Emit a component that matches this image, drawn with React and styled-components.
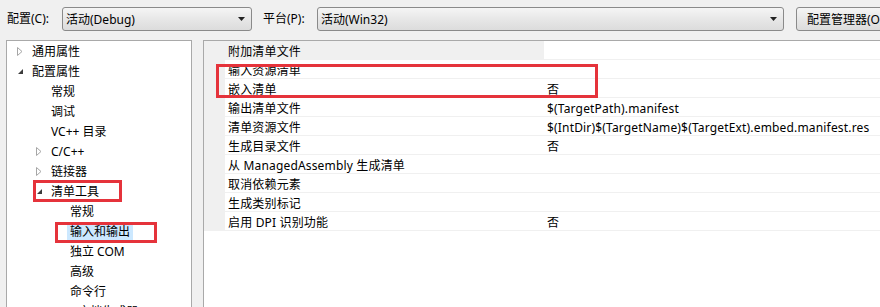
import React from "react";
import styled, { createGlobalStyle } from "styled-components";

const Global = createGlobalStyle`
  html, body { margin: 0; padding: 0; background: #f0f0f0; overflow: hidden; }
  body {
    font-family: "Segoe UI", "Noto Sans", "Noto Sans CJK SC", sans-serif;
    font-size: 12px;
    color: #000;
  }
`;

const Page = styled.div`
  width: 880px;
  height: 307px;
  overflow: hidden;
  background: #f0f0f0;
`;

const TopBar = styled.div`
  display: flex;
  align-items: center;
  height: 24px;
  padding: 7px 0 0 7px;
  white-space: nowrap;
`;

const FieldLabel = styled.span`
  width: ${(p) => p.$w}px;
  flex: none;
  line-height: 24px;
`;

const Select = styled.div`
  flex: none;
  box-sizing: border-box;
  width: ${(p) => p.$w}px;
  height: 24px;
  margin-right: ${(p) => p.$mr || 0}px;
  display: flex;
  align-items: center;
  justify-content: space-between;
  padding: 0 5px 0 3px;
  border: 1px solid #8a8a8a;
  border-radius: 3px;
  background: linear-gradient(#f5f5f5, #e6e6e6 55%, #dcdcdc);
`;

const Arrow = styled.svg`
  width: 7px;
  height: 4px;
  margin-right: 1px;
`;

const Button = styled.div`
  flex: none;
  box-sizing: border-box;
  width: 110px;
  height: 24px;
  display: flex;
  align-items: center;
  padding-left: 10px;
  border: 1px solid #8a8a8a;
  border-radius: 3px;
  background: linear-gradient(#f5f5f5, #e6e6e6 55%, #dcdcdc);
`;

const Main = styled.div`
  display: flex;
  gap: 11px;
  margin-top: 9px;
  padding-left: 6px;
`;

const TreePanel = styled.div`
  position: relative;
  flex: none;
  box-sizing: border-box;
  width: 186px;
  height: 280px;
  background: #fff;
  border: 1px solid #a9a9a9;
  overflow: hidden;
`;

const TreeRow = styled.div`
  display: flex;
  align-items: center;
  height: 20px;
  padding-left: ${(p) => 8 + p.$level * 19}px;
  white-space: nowrap;
`;

const Expander = styled.span`
  flex: none;
  width: 15px;
  padding-left: 2px;
  display: flex;
  align-items: center;
`;

const TreeLabel = styled.span`
  margin-left: -3px;
  padding: 0 3px;
  line-height: 17px;
  background: ${(p) => (p.$selected ? "#cce8ff" : "transparent")};
`;

const GridPanel = styled.div`
  position: relative;
  flex: 1;
  height: 280px;
  background: #fff;
  border-top: 1px solid #a9a9a9;
  border-left: 1px solid #a9a9a9;
`;

const PropRow = styled.div`
  display: grid;
  grid-template-columns: 21px 319px 1fr;
  height: 19px;
  white-space: nowrap;
`;

const Gutter = styled.div`
  background: #f0f0f0;
`;

const Cell = styled.div`
  box-sizing: border-box;
  padding: 3px 0 0 3px;
  line-height: 15px;
  letter-spacing: 0.17px;
  border-bottom: 1px solid #f0f0f0;
  background: ${(p) => (p.$selected ? "#f0f0f0" : "#fff")};
  overflow: hidden;
`;

const Mark = styled.div`
  position: absolute;
  box-sizing: border-box;
  border: 3px solid #e5333b;
  pointer-events: none;
`;

const Collapsed = () => (
  <svg width="6" height="9" viewBox="0 0 6 9">
    <path d="M0.5 0.5 L5 4.5 L0.5 8.5 Z" fill="none" stroke="#a6a6a6" strokeWidth="1" />
  </svg>
);

const Expanded = () => (
  <svg width="7" height="7" viewBox="0 0 7 7">
    <path d="M6 1 L6 6 L1 6 Z" fill="#3c3c3c" />
  </svg>
);

const tree = [
  { level: 0, text: "通用属性", exp: "c" },
  { level: 0, text: "配置属性", exp: "e" },
  { level: 1, text: "常规" },
  { level: 1, text: "调试" },
  { level: 1, text: "VC++ 目录" },
  { level: 1, text: "C/C++", exp: "c" },
  { level: 1, text: "链接器", exp: "c" },
  { level: 1, text: "清单工具", exp: "e" },
  { level: 2, text: "常规" },
  { level: 2, text: "输入和输出", selected: true },
  { level: 2, text: "独立 COM" },
  { level: 2, text: "高级" },
  { level: 2, text: "命令行" },
  { level: 1, text: "XML 文档生成器", exp: "c" },
];

const props = [
  ["附加清单文件", "", true],
  ["输入资源清单", ""],
  ["嵌入清单", "否"],
  ["输出清单文件", "$(TargetPath).manifest"],
  ["清单资源文件", "$(IntDir)$(TargetName)$(TargetExt).embed.manifest.res"],
  ["生成目录文件", "否"],
  ["从 ManagedAssembly 生成清单", ""],
  ["取消依赖元素", ""],
  ["生成类别标记", ""],
  ["启用 DPI 识别功能", "否"],
];

const DropArrow = () => (
  <Arrow viewBox="0 0 7 4">
    <path d="M0 0 L7 0 L3.5 4 Z" fill="#222" />
  </Arrow>
);

export default function App() {
  return (
    <Page>
      <Global />
      <TopBar>
        <FieldLabel $w={55}>配置(C):</FieldLabel>
        <Select $w={190} $mr={11}>
          <span>活动(Debug)</span>
          <DropArrow />
        </Select>
        <FieldLabel $w={54}>平台(P):</FieldLabel>
        <Select $w={467} $mr={12}>
          <span>活动(Win32)</span>
          <DropArrow />
        </Select>
        <Button>配置管理器(O)...</Button>
      </TopBar>
      <Main>
        <TreePanel>
          {tree.map((t, i) => (
            <TreeRow key={i} $level={t.level}>
              <Expander>
                {t.exp === "c" ? <Collapsed /> : t.exp === "e" ? <Expanded /> : null}
              </Expander>
              <TreeLabel $selected={t.selected}>{t.text}</TreeLabel>
            </TreeRow>
          ))}
          <Mark style={{ left: 26, top: 139, width: 89, height: 22 }} />
          <Mark style={{ left: 48, top: 181, width: 102, height: 21 }} />
        </TreePanel>
        <GridPanel>
          {props.map(([name, value, sel], i) => (
            <PropRow key={i}>
              <Gutter />
              <Cell $selected={sel}>{name}</Cell>
              <Cell>{value}</Cell>
            </PropRow>
          ))}
          <Mark style={{ left: 12, top: 23, width: 382, height: 34 }} />
        </GridPanel>
      </Main>
    </Page>
  );
}
